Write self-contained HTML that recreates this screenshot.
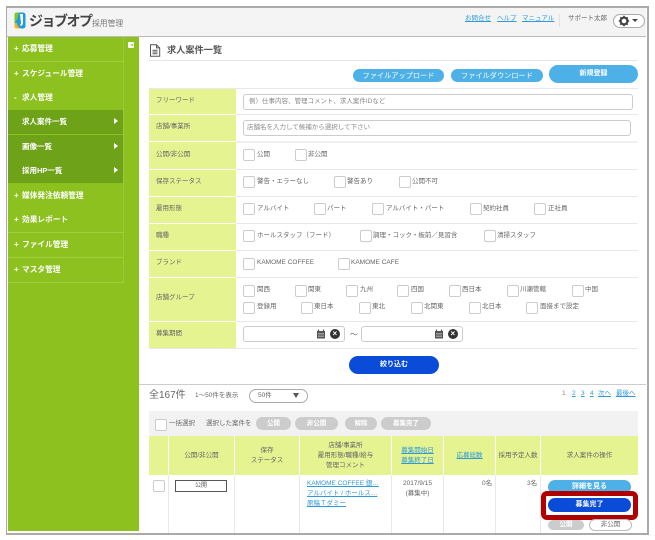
<!DOCTYPE html>
<html lang="ja"><head><meta charset="utf-8">
<style>
html,body{margin:0;padding:0;background:#fff;width:655px;height:540px;overflow:hidden}
body{position:relative;font-family:"Liberation Sans","Noto Sans CJK JP",sans-serif;color:#666;font-size:6.5px;filter:blur(.3px)}
div,a,span.t,svg{position:absolute}
.t{white-space:nowrap;line-height:10px}
.a{color:#2f9ada;text-decoration:underline}
.n{left:8px;width:115px;height:24px;background:#8cc11f;border-bottom:1px solid #a3cf45;box-sizing:content-box}
.n span{position:absolute;left:14px;top:6px;color:#fff;font-size:7.7px;font-weight:bold;line-height:12px;white-space:nowrap}
.n i{position:absolute;left:6px;top:6px;color:#fff;font-size:8px;font-weight:bold;font-style:normal;line-height:12px}
.s{left:8px;width:115px;height:24px;background:#6ea218;border-bottom:1px solid #8cc11f}
.s span{position:absolute;left:14px;top:6px;color:#fff;font-size:7.5px;font-weight:bold;line-height:12px;white-space:nowrap}
.s b{position:absolute;left:106px;top:8px;width:0;height:0;border-left:4px solid #fff;border-top:3.5px solid transparent;border-bottom:3.5px solid transparent}
.l{left:149px;width:87px;background:#e6f391}
.h{left:149px;width:489px;height:1px;background:#e8e8e8}
.lb{left:156px}
.c{width:10px;height:10px;border:1px solid #ccc;border-radius:2px;background:#fff}
.i{height:14px;border:1px solid #ccc;border-radius:3px;background:#fff;box-sizing:content-box}
.b{background:#4db1e8;color:#fff;text-align:center;border-radius:9px;font-size:7px;line-height:14px;white-space:nowrap}
.g{background:#ccc;color:#fff;text-align:center;border-radius:7px;font-size:6.5px;line-height:13px;top:417px;height:13px;font-weight:bold}
.v{top:436px;width:1px;height:97px;background:#e8e8e8}
.vw{top:436px;width:1px;height:39px;background:#fff}
.ct{text-align:center;line-height:10px;white-space:nowrap}
</style></head><body>

<!-- frame -->
<div style="left:6px;top:6px;width:640px;height:525px;border:2px solid #aaa;border-left-width:1px;background:#fff"></div>
<div style="left:7px;top:8px;width:639px;height:28px;background:#f4f4f4;border-bottom:1px solid #bbb"></div>

<!-- logo -->
<svg style="left:14px;top:12px" width="12" height="17" viewBox="0 0 12 17"><rect x="0.5" y="0.5" width="11" height="16" rx="2.5" fill="#1d9be0"/><path d="M0.5 11 L0.5 14 Q0.5 16.5 3 16.5 L7 16.5 Q3 15 3 11Z" fill="#f2b711"/><path d="M6 2h3v9q0 2-2 3l-1-1q1-1 1-2z" fill="#fff"/><path d="M0.5 3 Q0.5 .5 3 .5 L5 .5 L3 8 L.5 11Z" fill="#7dc52b"/></svg>
<span class="t" style="left:29px;top:11px;font-size:14px;font-weight:bold;color:#444;line-height:20px;letter-spacing:-1.5px">ジョブオプ</span>
<span class="t" style="left:92px;top:19px;font-size:7.8px;color:#777">採用管理</span>

<!-- header right -->
<span class="t a" style="left:465px;top:14px">お問合せ</span>
<span class="t a" style="left:497px;top:14px">ヘルプ</span>
<span class="t a" style="left:522px;top:14px">マニュアル</span>
<div style="left:559px;top:14px;width:1px;height:13px;background:#e2e2e2"></div>
<span class="t" style="left:568px;top:14px">サポート太郎</span>
<div style="left:613px;top:14px;width:30px;height:12px;border:1px solid #aaa;border-radius:7px;background:#fff"></div>
<svg style="left:618px;top:15px" width="12" height="12" viewBox="0 0 12 12"><circle cx="6" cy="6" r="3.4" fill="none" stroke="#444" stroke-width="2.2"/><path d="M6 0.8v2M6 9.2v2M.8 6h2M9.2 6h2M2.3 2.3l1.4 1.4M8.3 8.3l1.4 1.4M2.3 9.7l1.4-1.4M8.3 3.7l1.4-1.4" stroke="#444" stroke-width="1.6"/></svg>
<div style="left:632px;top:19px;width:0;height:0;border-top:3px solid #444;border-left:3px solid transparent;border-right:3px solid transparent"></div>

<!-- sidebar -->
<div style="left:8px;top:37px;width:131px;height:494px;background:#8cc11f"></div>
<div style="left:123px;top:37px;width:1px;height:246px;background:#9bc93c"></div>
<div style="left:128px;top:42px;width:6px;height:6px;background:#fff;border-radius:1px"></div>
<div style="left:129.5px;top:43.5px;width:0;height:0;border-right:3px solid #8cc11f;border-top:1.5px solid transparent;border-bottom:1.5px solid transparent"></div>

<div class="n" style="top:37px"><i>+</i><span style="left:14px">応募管理</span></div>
<div class="n" style="top:62px"><i>+</i><span>スケジュール管理</span></div>
<div class="n" style="top:86px"><i>-</i><span>求人管理</span></div>
<div class="s" style="top:110px"><span>求人案件一覧</span><b></b></div>
<div class="s" style="top:135px"><span>画像一覧</span><b></b></div>
<div class="s" style="top:159px"><span>採用HP一覧</span><b></b></div>
<div class="n" style="top:184px"><i>+</i><span>媒体発注依頼管理</span></div>
<div class="n" style="top:208px"><i>+</i><span>効果レポート</span></div>
<div class="n" style="top:233px"><i>+</i><span>ファイル管理</span></div>
<div class="n" style="top:258px"><i>+</i><span>マスタ管理</span></div>

<!-- title -->
<svg style="left:149px;top:44px" width="12" height="13" viewBox="0 0 12 13"><path d="M1.5.7h6l3.2 3.2v8.4h-9.2zM7.5.7v3.2h3.2M3.5 6.3h5M3.5 8h5M3.5 9.8h5" fill="none" stroke="#555" stroke-width="1"/></svg>
<span class="t" style="left:167px;top:45px;font-size:9.2px;font-weight:bold;color:#555">求人案件一覧</span>
<div style="left:149px;top:60px;width:489px;height:1px;background:#e6e6e6"></div>

<!-- top buttons -->
<div class="b" style="left:353px;top:69px;width:91px;height:13px;line-height:13px;font-size:7.2px">ファイルアップロード</div>
<div class="b" style="left:451px;top:69px;width:92px;height:13px;line-height:13px;font-size:7.2px">ファイルダウンロード</div>
<div class="b" style="left:549px;top:65px;width:89px;height:18px;line-height:18px;font-weight:bold;border-radius:9px;font-size:7px">新規登録</div>

<!-- form -->
<div class="h" style="top:88px"></div>
<div class="l" style="top:89px;height:25px"></div>
<div class="l" style="top:115px;height:26px"></div>
<div class="l" style="top:142px;height:27px"></div>
<div class="l" style="top:170px;height:26px"></div>
<div class="l" style="top:197px;height:26px"></div>
<div class="l" style="top:224px;height:26px"></div>
<div class="l" style="top:251px;height:26px"></div>
<div class="l" style="top:278px;height:43px"></div>
<div class="l" style="top:322px;height:26px"></div>
<div class="h" style="left:236px;width:402px;top:114px"></div>
<div class="h" style="left:236px;width:402px;top:141px;height:2px;background:#f0f0f0"></div>
<div class="h" style="left:236px;width:402px;top:169px"></div>
<div class="h" style="left:236px;width:402px;top:196px"></div>
<div class="h" style="left:236px;width:402px;top:223px"></div>
<div class="h" style="left:236px;width:402px;top:250px"></div>
<div class="h" style="left:236px;width:402px;top:277px"></div>
<div class="h" style="left:236px;width:402px;top:321px"></div>
<div class="h" style="top:348px"></div>

<span class="t lb" style="top:96px">フリーワード</span>
<span class="t lb" style="top:122px">店舗/事業所</span>
<span class="t lb" style="top:150px">公開/非公開</span>
<span class="t lb" style="top:177px">保存ステータス</span>
<span class="t lb" style="top:204px">雇用形態</span>
<span class="t lb" style="top:231px">職種</span>
<span class="t lb" style="top:258px">ブランド</span>
<span class="t lb" style="top:293px">店舗グループ</span>
<span class="t lb" style="top:329px">募集期間</span>

<div class="i" style="left:243px;top:94px;width:388px"></div>
<span class="t" style="left:249px;top:97px;color:#888">例）仕事内容、管理コメント、求人案件IDなど</span>
<div class="i" style="left:243px;top:120px;width:386px"></div>
<span class="t" style="left:247px;top:123px;color:#888">店舗名を入力して候補から選択して下さい</span>

<!-- row: public -->
<div class="c" style="left:243px;top:149px"></div><span class="t" style="left:257px;top:150px">公開</span>
<div class="c" style="left:295px;top:149px"></div><span class="t" style="left:308px;top:150px">非公開</span>
<!-- row: status -->
<div class="c" style="left:243px;top:176px"></div><span class="t" style="left:257px;top:177px">警告・エラーなし</span>
<div class="c" style="left:334px;top:176px"></div><span class="t" style="left:347px;top:177px">警告あり</span>
<div class="c" style="left:399px;top:176px"></div><span class="t" style="left:412px;top:177px">公開不可</span>
<!-- row: employment -->
<div class="c" style="left:243px;top:203px"></div><span class="t" style="left:257px;top:204px">アルバイト</span>
<div class="c" style="left:314px;top:203px"></div><span class="t" style="left:327px;top:204px">パート</span>
<div class="c" style="left:372px;top:203px"></div><span class="t" style="left:386px;top:204px">アルバイト・パート</span>
<div class="c" style="left:470px;top:203px"></div><span class="t" style="left:483px;top:204px">契約社員</span>
<div class="c" style="left:534px;top:203px"></div><span class="t" style="left:548px;top:204px">正社員</span>
<!-- row: job -->
<div class="c" style="left:243px;top:230px"></div><span class="t" style="left:257px;top:231px">ホールスタッフ（フード）</span>
<div class="c" style="left:360px;top:230px"></div><span class="t" style="left:373px;top:231px">調理・コック・板前／見習含</span>
<div class="c" style="left:484px;top:230px"></div><span class="t" style="left:497px;top:231px">清掃スタッフ</span>
<!-- row: brand -->
<div class="c" style="left:243px;top:258px"></div><span class="t" style="left:257px;top:258px">KAMOME COFFEE</span>
<div class="c" style="left:338px;top:258px"></div><span class="t" style="left:351px;top:258px">KAMOME CAFE</span>
<!-- row: group -->
<div class="c" style="left:243px;top:285px"></div><span class="t" style="left:257px;top:285px">関西</span>
<div class="c" style="left:295px;top:285px"></div><span class="t" style="left:308px;top:285px">関東</span>
<div class="c" style="left:346px;top:285px"></div><span class="t" style="left:360px;top:285px">九州</span>
<div class="c" style="left:397px;top:285px"></div><span class="t" style="left:411px;top:285px">四国</span>
<div class="c" style="left:449px;top:285px"></div><span class="t" style="left:462px;top:285px">西日本</span>
<div class="c" style="left:507px;top:285px"></div><span class="t" style="left:520px;top:285px">川瀬管轄</span>
<div class="c" style="left:572px;top:285px"></div><span class="t" style="left:585px;top:285px">中国</span>
<div class="c" style="left:243px;top:302px"></div><span class="t" style="left:257px;top:302px">登録用</span>
<div class="c" style="left:301px;top:302px"></div><span class="t" style="left:314px;top:302px">東日本</span>
<div class="c" style="left:359px;top:302px"></div><span class="t" style="left:372px;top:302px">東北</span>
<div class="c" style="left:411px;top:302px"></div><span class="t" style="left:424px;top:302px">北関東</span>
<div class="c" style="left:469px;top:302px"></div><span class="t" style="left:482px;top:302px">北日本</span>
<div class="c" style="left:526px;top:302px"></div><span class="t" style="left:540px;top:302px">面接まで設定</span>

<!-- period -->
<div class="i" style="left:243px;top:326px;width:100px"></div>
<svg style="left:316px;top:329px" width="10" height="10" viewBox="0 0 10 10"><path d="M1 2h8v7.5H1z" fill="#555"/><path d="M2.5.5v2M7.5.5v2" stroke="#555" stroke-width="1.2"/><path d="M2 4.5h6M2 6h6M2 7.5h6" stroke="#ddd" stroke-width=".6"/></svg>
<div style="left:330px;top:329px;width:10px;height:10px;border-radius:50%;background:#333"></div>
<span class="t" style="left:332.5px;top:329px;color:#fff;font-size:8px;font-weight:bold">×</span>
<span class="t" style="left:350px;top:330px;font-size:8px">～</span>
<div class="i" style="left:361px;top:326px;width:100px"></div>
<svg style="left:434px;top:329px" width="10" height="10" viewBox="0 0 10 10"><path d="M1 2h8v7.5H1z" fill="#555"/><path d="M2.5.5v2M7.5.5v2" stroke="#555" stroke-width="1.2"/><path d="M2 4.5h6M2 6h6M2 7.5h6" stroke="#ddd" stroke-width=".6"/></svg>
<div style="left:448px;top:329px;width:10px;height:10px;border-radius:50%;background:#333"></div>
<span class="t" style="left:450.5px;top:329px;color:#fff;font-size:8px;font-weight:bold">×</span>

<div class="b" style="left:349px;top:356px;width:90px;height:18px;line-height:18px;background:#0a4bd8;font-weight:bold">絞り込む</div>

<!-- list -->
<div style="left:139px;top:384px;width:507px;height:1px;background:#ccc"></div>
<span class="t" style="left:149px;top:390px;font-size:10px;line-height:12px;color:#666">全167件</span>
<span class="t" style="left:195px;top:391px">1～50件を表示</span>
<div style="left:249px;top:389px;width:57px;height:12px;border:1px solid #aaa;border-radius:7px;background:#fff"></div>
<span class="t" style="left:258px;top:391px">50件</span>
<div style="left:293px;top:393px;width:0;height:0;border-top:5px solid #555;border-left:3.5px solid transparent;border-right:3.5px solid transparent"></div>
<span class="t" style="left:562px;top:389px;color:#888">1</span>
<span class="t a" style="left:572px;top:389px">2</span>
<span class="t a" style="left:581px;top:389px">3</span>
<span class="t a" style="left:590px;top:389px">4</span>
<span class="t a" style="left:598px;top:389px">次へ</span>
<span class="t a" style="left:616px;top:389px">最後へ</span>

<div style="left:149px;top:411px;width:489px;height:25px;background:#f2f2f2"></div>
<div class="c" style="left:155px;top:419px;background:#fff"></div>
<span class="t" style="left:169px;top:419px">一括選択</span>
<span class="t" style="left:206px;top:419px">選択した案件を</span>
<div class="g" style="left:256px;width:35px">公開</div>
<div class="g" style="left:295px;width:43px">非公開</div>
<div class="g" style="left:345px;width:32px">解除</div>
<div class="g" style="left:381px;width:50px">募集完了</div>

<div style="left:149px;top:436px;width:489px;height:39px;background:#e6f391"></div>
<div class="v" style="left:168px"></div>
<div class="v" style="left:234px"></div>
<div class="v" style="left:299px"></div>
<div class="v" style="left:391px"></div>
<div class="v" style="left:443px"></div>
<div class="v" style="left:495px"></div>
<div class="v" style="left:540px"></div>
<div class="vw" style="left:168px"></div>
<div class="vw" style="left:234px"></div>
<div class="vw" style="left:299px"></div>
<div class="vw" style="left:391px"></div>
<div class="vw" style="left:443px"></div>
<div class="vw" style="left:495px"></div>
<div class="vw" style="left:540px"></div>

<div class="ct" style="left:169px;width:65px;top:451px">公開/非公開</div>
<div class="ct" style="left:235px;width:64px;top:446px">保存<br>ステータス</div>
<div class="ct" style="left:300px;width:91px;top:441px">店舗/事業所<br>雇用形態/職種/給与<br>管理コメント</div>
<div class="ct a" style="left:392px;width:51px;top:446px">募集開始日<br>募集終了日</div>
<div class="ct a" style="left:444px;width:51px;top:451px">応募総数</div>
<div class="ct" style="left:496px;width:44px;top:451px">採用予定人数</div>
<div class="ct" style="left:541px;width:97px;top:451px">求人案件の操作</div>

<div class="c" style="left:153px;top:480px"></div>
<div style="left:175px;top:480px;width:50px;height:10px;border:1px solid #555;background:#fff;text-align:center;line-height:10px;color:#555;font-size:6px">公開</div>
<span class="t a" style="left:307px;top:479px">KAMOME COFFEE 銀…</span>
<span class="t a" style="left:307px;top:489px">アルバイト / ホールス…</span>
<span class="t a" style="left:307px;top:499px">原稿Ｔダミー</span>
<div class="ct" style="left:392px;width:51px;top:479px">2017/9/15<br>(募集中)</div>
<span class="t" style="left:482px;top:479px">0名</span>
<span class="t" style="left:527px;top:479px">3名</span>

<div class="b" style="left:548px;top:480px;width:83px;height:14px;font-weight:bold">詳細を見る</div>
<div style="left:541px;top:491px;width:97px;height:29px;box-sizing:border-box;border:5px solid #b00000;border-radius:6px;background:#fff"></div>
<div class="b" style="left:548px;top:498px;width:83px;height:14px;background:#0a4bd8;font-weight:bold">募集完了</div>
<div class="b" style="left:548px;top:520px;width:36px;height:10px;line-height:10px;background:#ccc;font-size:6.5px;font-weight:bold">公開</div>
<div class="b" style="left:589px;top:519px;width:41px;height:10px;line-height:10px;background:#fff;border:1px solid #bbb;color:#666;font-size:6.5px">非公開</div>

<div style="left:139px;top:533px;width:509px;height:1px;background:#aaa"></div>
</body></html>
